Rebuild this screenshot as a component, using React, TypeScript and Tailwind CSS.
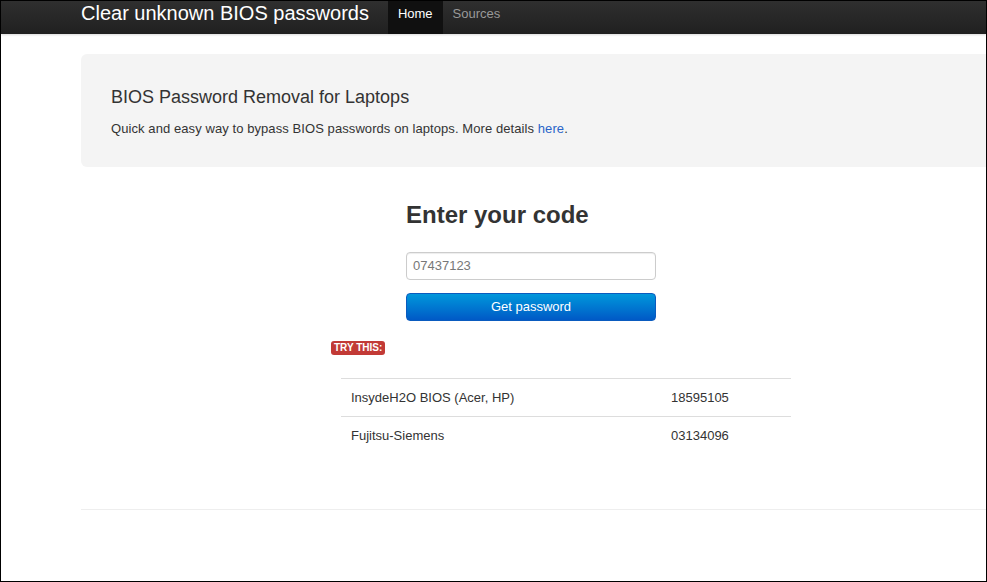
import React from "react";

export default function App() {
  return (
    <div
      className="w-[987px] h-[582px] border border-black overflow-hidden bg-white box-border"
      style={{ fontFamily: '"Liberation Sans", Arial, sans-serif' }}
    >
      {/* navbar */}
      <div className="h-[33px] bg-gradient-to-b from-[#2f2f2f] to-[#202020] shadow-[0_1px_2px_rgba(0,0,0,0.15)] relative">
        <div className="pl-[80px] flex h-full items-stretch">
          <div className="text-[20px] leading-[24px] text-white pr-[20px] whitespace-nowrap">
            Clear unknown BIOS passwords
          </div>
          <div className="flex h-full -ml-[1px]">
            <div className="h-full px-[10px] pt-[3px] text-[13px] leading-[20px] text-white bg-[#101010]">
              Home
            </div>
            <div className="h-full px-[10px] pt-[3px] text-[13px] leading-[20px] text-[#999]">
              Sources
            </div>
          </div>
        </div>
      </div>

      <div className="pl-[80px]">
        <div className="w-[940px]">
          {/* hero */}
          <div className="mt-[20px] h-[113px] bg-[#f4f4f4] rounded-[6px] pl-[30px] pt-[32px]">
            <div className="text-[18px] leading-[22px] text-[#333]">
              BIOS Password Removal for Laptops
            </div>
            <div className="mt-[12px] text-[13px] leading-[18px] tracking-[0.08px] text-[#333]">
              Quick and easy way to bypass BIOS passwords on laptops. More details{" "}
              <span className="text-[#2a64c9]">here</span>.
            </div>
          </div>

          {/* form */}
          <div className="ml-[325px] mt-[33px]">
            <div className="text-[24px] leading-[30px] font-bold text-[#333]">
              Enter your code
            </div>
            <div className="mt-[22px] w-[250px] h-[28px] border border-[#ccc] rounded-[4px] bg-white px-[6px] flex items-center text-[13px] text-[#777] shadow-[inset_0_1px_1px_rgba(0,0,0,0.075)]">
              07437123
            </div>
            <div className="mt-[13px] w-[250px] h-[28px] rounded-[4px] border border-[#0a5bbf] bg-gradient-to-b from-[#0397db] to-[#0059c6] flex items-center justify-center text-[13px] text-white">
              Get password
            </div>
          </div>

          <div className="ml-[250px] mt-[20px] flex">
            <span className="h-[14px] px-[3px] rounded-[3px] bg-[#c23a36] text-white text-[10px] leading-[14px] font-bold">
              TRY THIS:
            </span>
          </div>

          <div className="ml-[260px] mt-[23px] w-[450px] text-[13px] text-[#333]">
            <div className="h-[38px] border-t border-[#ddd] flex items-center pl-[10px]">
              <div className="w-[320px]">InsydeH2O BIOS (Acer, HP)</div>
              <div>18595105</div>
            </div>
            <div className="h-[38px] border-t border-[#ddd] flex items-center pl-[10px]">
              <div className="w-[320px]">Fujitsu-Siemens</div>
              <div>03134096</div>
            </div>
          </div>

          <div className="mt-[55px] border-t border-[#eee]" />
        </div>
      </div>
    </div>
  );
}
